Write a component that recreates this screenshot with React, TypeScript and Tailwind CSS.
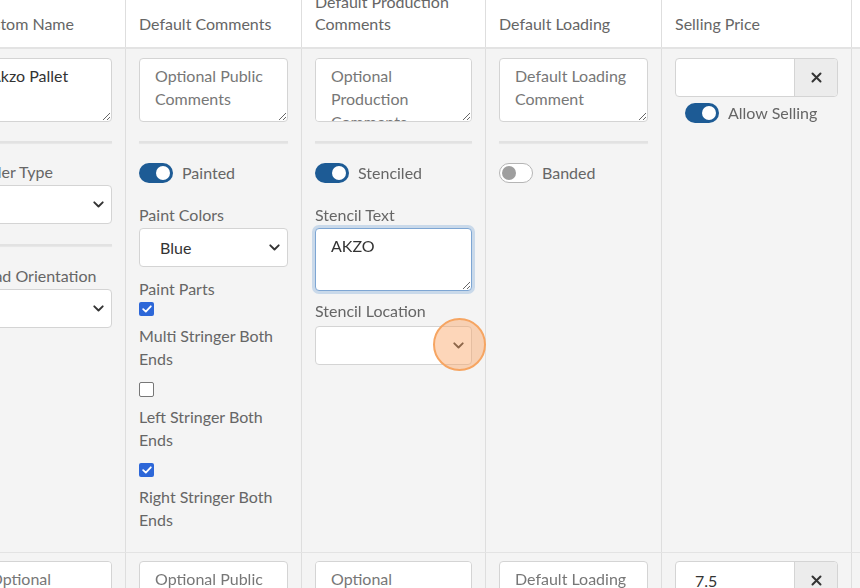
import React from "react";

const font = { fontFamily: "Lato, 'Open Sans', Arial, sans-serif" };

function Chevron() {
  return (
    <svg width="11" height="7" viewBox="0 0 11 7" fill="none">
      <path d="M1.3 1.3 L5.5 5.5 L9.7 1.3" stroke="#333" strokeWidth="1.9" strokeLinecap="round" strokeLinejoin="round" />
    </svg>
  );
}

function Select({ value }: { value?: string }) {
  return (
    <div className="flex h-[39px] w-full items-center justify-between rounded-[4px] border border-[#d4d4d4] bg-white pl-[20px] pr-[7px] text-[16px] text-[#333]">
      <span>{value ?? ""}</span>
      <Chevron />
    </div>
  );
}

function Area({ text, placeholder, h = 64, focused = false }: { text?: string; placeholder?: string; h?: number; focused?: boolean }) {
  return (
    <textarea
      readOnly
      defaultValue={text}
      placeholder={placeholder}
      style={{ height: h }}
      className={
        "block w-full resize-y rounded-[4px] border bg-white px-[15px] pt-[5px] text-[16px] leading-[23px] text-[#333] outline-none placeholder:text-[#777] " +
        (focused
          ? "border-[#7ea6d3] shadow-[0_0_0_3px_rgba(120,165,215,0.35)]"
          : "border-[#d4d4d4]")
      }
    />
  );
}

function Toggle({ on, label }: { on: boolean; label: string }) {
  return (
    <div className="flex h-[20px] items-center gap-[9px]">
      {on ? (
        <div className="flex h-[20px] w-[34px] items-center justify-end rounded-full bg-[#1d5b95] pr-[3px]">
          <div className="h-[14px] w-[14px] rounded-full bg-white" />
        </div>
      ) : (
        <div className="flex h-[20px] w-[34px] items-center justify-start rounded-full border border-[#b5b5b5] bg-white pl-[2px]">
          <div className="h-[14px] w-[14px] rounded-full bg-[#9e9e9e]" />
        </div>
      )}
      <span className="text-[16px] text-[#666]">{label}</span>
    </div>
  );
}

function Hr({ mt = 19, mb = 20 }: { mt?: number; mb?: number }) {
  return (
    <div
      style={{ marginTop: mt, marginBottom: mb }}
      className="h-[2px] w-full bg-[#e2e2e2] shadow-[0_1px_1px_rgba(0,0,0,0.06)]"
    />
  );
}

function Label({ children }: { children: React.ReactNode }) {
  return <div className="text-[16px] leading-[23px] text-[#666]">{children}</div>;
}

function Check({ on, label }: { on: boolean; label: React.ReactNode }) {
  return (
    <div>
      {on ? (
        <div className="flex h-[14px] w-[15px] items-center justify-center rounded-[2px] bg-[#2d67d8]">
          <svg width="10" height="8" viewBox="0 0 10 8" fill="none">
            <path d="M1.2 4.2 L3.8 6.6 L8.8 1.3" stroke="white" strokeWidth="1.8" strokeLinecap="round" strokeLinejoin="round" />
          </svg>
        </div>
      ) : (
        <div className="h-[15px] w-[15px] rounded-[2px] border border-[#777] bg-white" />
      )}
      <div className="mt-[8px] text-[16px] leading-[23px] text-[#666]">{label}</div>
    </div>
  );
}

function PriceInput({ value }: { value?: string }) {
  return (
    <div className="flex h-[39px] w-full rounded-[4px] border border-[#d4d4d4] bg-white">
      <div className="flex flex-1 items-center pl-[19px] text-[16px] text-[#333]">{value ?? ""}</div>
      <div className="flex w-[43px] items-center justify-center rounded-r-[4px] border-l border-[#d4d4d4] bg-[#ececec] text-[#333]">
        <svg width="11" height="11" viewBox="0 0 11 11">
          <path d="M1.5 1.5 L9.5 9.5 M9.5 1.5 L1.5 9.5" stroke="#333" strokeWidth="2" strokeLinecap="round" />
        </svg>
      </div>
    </div>
  );
}

const widths = [165, 176, 184, 176, 190, 120];

function Cell({ i, children, className = "" }: { i: number; children?: React.ReactNode; className?: string }) {
  return (
    <div
      style={{ width: widths[i] }}
      className={"shrink-0 border-r border-[#dedede] px-[13px] " + className}
    >
      {children}
    </div>
  );
}

export default function App() {
  const headers = ["Custom Name", "Default Comments", "Default Production Comments", "Default Loading", "Selling Price", ""];
  return (
    <div style={font} className="relative h-[588px] w-[860px] overflow-hidden bg-[#f4f4f4]">
      <div className="-mt-[21px] -ml-[39px] flex w-max flex-col">
        {/* header */}
        <div className="flex h-[70px] border-b-2 border-[#e3e3e3] bg-white">
          {headers.map((h, i) => (
            <Cell key={i} i={i} className="flex items-end pb-[12px]">
              <div className="text-[16px] leading-[22px] text-[#666]">{h}</div>
            </Cell>
          ))}
        </div>

        {/* row 1 */}
        <div className="flex">
          <Cell i={0} className="pt-[9px] pb-[20px]">
            <Area text="Akzo Pallet" />
            <Hr mb={17} />
            <Label>Nailer Type</Label>
            <div className="mt-[2px]"><Select /></div>
            <Hr mt={20} mb={18} />
            <Label>Head Orientation</Label>
            <div className="mt-[2px]"><Select /></div>
          </Cell>
          <Cell i={1} className="pt-[9px] pb-[21px]">
            <Area placeholder={"Optional Public Comments"} />
            <Hr />
            <Toggle on label="Painted" />
            <div className="mt-[20px]"><Label>Paint Colors</Label></div>
            <div className="mt-[2px]"><Select value="Blue" /></div>
            <div className="mt-[10px]"><Label>Paint Parts</Label></div>
            <div className="mt-[2px] flex flex-col gap-[12px]">
              <Check on label={<>Multi Stringer Both<br />Ends</>} />
              <Check on={false} label={<>Left Stringer Both<br />Ends</>} />
              <Check on label={<>Right Stringer Both<br />Ends</>} />
            </div>
          </Cell>
          <Cell i={2} className="pt-[9px]">
            <Area placeholder={"Optional Production Comments"} />
            <Hr />
            <Toggle on label="Stenciled" />
            <div className="mt-[20px]"><Label>Stencil Text</Label></div>
            <div className="mt-[2px]"><Area text="AKZO" h={63} focused /></div>
            <div className="mt-[8px]"><Label>Stencil Location</Label></div>
            <div className="mt-[4px]"><Select /></div>
          </Cell>
          <Cell i={3} className="pt-[9px]">
            <Area placeholder={"Default Loading Comment"} />
            <Hr />
            <Toggle on={false} label="Banded" />
          </Cell>
          <Cell i={4} className="pt-[9px]">
            <PriceInput />
            <div className="mt-[6px] pl-[10px]">
              <Toggle on label="Allow Selling" />
            </div>
          </Cell>
          <Cell i={5} />
        </div>

        {/* row 2 */}
        <div className="flex border-t border-[#e3e3e3]">
          <Cell i={0} className="pt-[8px]"><Area placeholder="Optional Public Comments" /></Cell>
          <Cell i={1} className="pt-[8px]"><Area placeholder="Optional Public Comments" /></Cell>
          <Cell i={2} className="pt-[8px]"><Area placeholder="Optional Production Comments" /></Cell>
          <Cell i={3} className="pt-[8px]"><Area placeholder="Default Loading Comment" /></Cell>
          <Cell i={4} className="pt-[8px]"><PriceInput value="7.5" /></Cell>
          <Cell i={5} />
        </div>
      </div>

      {/* click highlight */}
      <div className="absolute left-[433px] top-[318px] h-[53px] w-[53px] rounded-full border-2 border-[#f6a562] bg-[rgba(250,165,100,0.45)]" />
    </div>
  );
}
